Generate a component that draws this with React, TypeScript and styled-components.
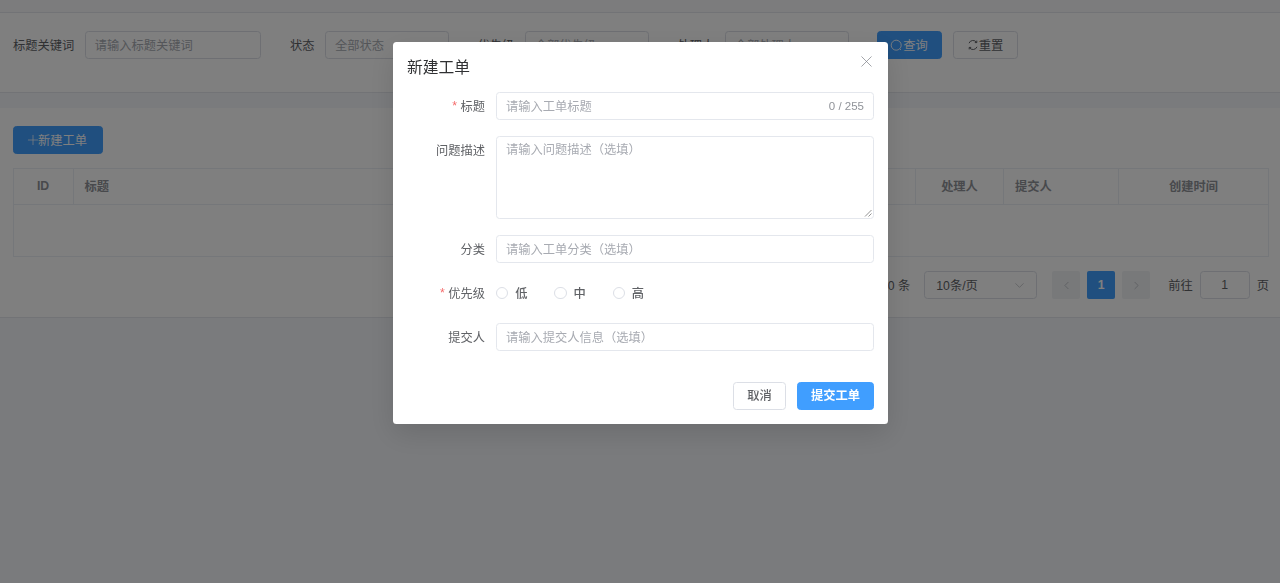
import styled, { createGlobalStyle } from "styled-components";
import { ChevronDown, ChevronLeft, ChevronRight, Plus, X } from "lucide-react";

const FONT = `"Liberation Sans", "Noto Sans CJK SC", sans-serif`;

const GlobalStyle = createGlobalStyle`
  html, body {
    margin: 0;
    padding: 0;
    height: 100%;
    background: #f5f7fa;
    font-family: ${FONT};
    font-size: 12.25px;
    color: #606266;
    overflow: hidden;
  }
  * { box-sizing: border-box; }
`;

const Page = styled.div`
  height: 583px;
  background: #f5f7fa;
`;

const TopStrip = styled.div`
  height: 13px;
  background: #f8f9fb;
  border-bottom: 1px solid #e4e7ed;
`;

const Card = styled.div`
  background: #fff;
  border-bottom: 1px solid #e4e7ed;
`;

const FilterCard = styled(Card)`
  height: 80px;
  padding: 18px 13px 0;
  display: flex;
  align-items: flex-start;
  margin-bottom: 15px;
`;

const FilterItem = styled.div`
  display: flex;
  align-items: center;
  height: 28px;
  margin-right: 28.7px;
`;

const FilterLabel = styled.label`
  margin-right: 10.5px;
  color: #606266;
  white-space: nowrap;
`;

const Field = styled.div<{ $w: number }>`
  width: ${(p) => p.$w}px;
  height: 28px;
  display: flex;
  align-items: center;
  justify-content: space-between;
  padding: 0 9px;
  border: 1px solid #dcdfe6;
  border-radius: 3.5px;
  color: #a8abb2;
  background: #fff;
  white-space: nowrap;
`;

const Btn = styled.button<{ $primary?: boolean }>`
  display: inline-flex;
  align-items: center;
  justify-content: center;
  height: 28px;
  padding: 0;
  border: 1px solid ${(p) => (p.$primary ? "#409eff" : "#dcdfe6")};
  border-radius: 3.5px;
  background: ${(p) => (p.$primary ? "#409eff" : "#fff")};
  color: ${(p) => (p.$primary ? "#fff" : "#606266")};
  font: inherit;
`;

const FilterButton = styled(Btn)`
  width: 65px;
  margin-right: 11px;
`;

const QueryGroup = styled.div`
  display: flex;
  margin-left: -1px;
`;

const TableCard = styled(Card)`
  height: 210px;
  padding: 18px 11px 0 12.5px;
`;

const NewButton = styled(Btn)`
  width: 90px;
`;

const PlusIcon = styled(Plus)`
  margin: 0 -3px;
`;

const Table = styled.div`
  margin-top: 14px;
  height: 89px;
  border: 1px solid #ebeef5;
`;

const HeaderRow = styled.div`
  display: grid;
  grid-template-columns: 60px 1fr 120px 120px 120px 88px 115px 149px;
  height: 36px;
  border-bottom: 1px solid #ebeef5;
`;

const HeaderCell = styled.div<{ $center?: boolean }>`
  display: flex;
  align-items: center;
  justify-content: ${(p) => (p.$center ? "center" : "flex-start")};
  padding: 0 11px 2px;
  border-right: 1px solid #ebeef5;
  color: #909399;
  font-weight: 700;
  &:last-child { border-right: none; }
`;

const Pager = styled.div`
  display: flex;
  align-items: center;
  justify-content: flex-end;
  height: 28px;
  margin-top: 14px;
`;

const PagerBox = styled.div<{ $active?: boolean }>`
  width: 28px;
  height: 28px;
  display: flex;
  align-items: center;
  justify-content: center;
  margin-right: 7px;
  border-radius: 2px;
  font-weight: 700;
  background: ${(p) => (p.$active ? "#409eff" : "#f0f2f5")};
  color: ${(p) => (p.$active ? "#fff" : "#a8abb2")};
`;

const Total = styled.span`
  margin-right: 14px;
`;

const SizeSelect = styled(Field)`
  color: #606266;
  margin-right: 15px;
  padding-left: 11px;
`;

const GotoLabel = styled.span`
  margin: 0 7px 0 11px;
`;

const GotoInput = styled(Field)`
  justify-content: center;
  color: #606266;
`;

const PageUnit = styled.span`
  margin-left: 7px;
`;

const Mask = styled.div`
  position: fixed;
  inset: 0;
  z-index: 10;
  background: rgba(0, 0, 0, 0.5);
  display: flex;
  justify-content: center;
  align-items: flex-start;
`;

const Modal = styled.div`
  width: 495px;
  height: 382px;
  margin: 42px 0 0 1px;
  padding: 0 14px;
  background: #fff;
  border-radius: 3.5px;
  box-shadow: 0 10px 28px rgba(0, 0, 0, 0.12);
`;

const ModalHead = styled.div`
  height: 50px;
  padding-bottom: 2px;
  display: flex;
  align-items: center;
  justify-content: space-between;
`;

const ModalTitle = styled.h2`
  margin: 0;
  font-size: 15.75px;
  font-weight: 400;
  color: #303133;
`;

const CloseButton = styled.button`
  display: flex;
  padding: 0;
  border: none;
  background: none;
  color: #7d8087;
  margin: -9px -2px 0 0;
`;

const Form = styled.div`
  display: flex;
  flex-direction: column;
  gap: 16px;
`;

const FormRow = styled.div`
  display: flex;
  align-items: flex-start;
`;

const FormLabel = styled.label<{ $required?: boolean }>`
  width: 78px;
  height: 28px;
  flex: none;
  display: flex;
  align-items: center;
  justify-content: flex-end;
  margin-right: 11px;
  color: #606266;
  &::before {
    content: ${(p) => (p.$required ? '"*"' : "none")};
    color: #f56c6c;
    margin-right: 3.5px;
  }
`;

const Input = styled(Field).attrs({ $w: 378 })`
  color: #a8abb2;
  border-color: #e4e7ed;
`;

const Counter = styled.span`
  color: #909399;
  font-size: 11.5px;
`;

const TextArea = styled.div`
  position: relative;
  width: 378px;
  height: 83px;
  padding: 4px 9px;
  border: 1px solid #e4e7ed;
  border-radius: 3.5px;
  color: #a8abb2;
  line-height: 18px;
`;

const ResizeGrip = styled.svg`
  position: absolute;
  right: 1px;
  bottom: 1px;
`;

const RadioGroup = styled.div`
  display: flex;
  align-items: center;
  height: 28px;
`;

const RadioOption = styled.label`
  width: 58.3px;
  display: flex;
  align-items: center;
  color: #606266;
  font-weight: 500;
`;

const RadioDot = styled.span`
  width: 12.25px;
  height: 12.25px;
  border: 1px solid #dcdfe6;
  border-radius: 50%;
  margin-right: 7px;
`;

const Footer = styled.div`
  display: flex;
  justify-content: flex-end;
  gap: 11px;
  margin-top: 31px;
`;

const CancelButton = styled(Btn)`
  width: 53px;
  padding-bottom: 2px;
  font-weight: 500;
`;

const SubmitButton = styled(Btn)`
  width: 77px;
  padding-bottom: 2px;
  font-weight: 700;
`;

const columns = ["ID", "标题", "状态", "优先级", "分类", "处理人", "提交人", "创建时间"];
const centered = new Set(["ID", "处理人", "创建时间"]);

function SearchIcon() {
  return (
    <svg width="13" height="13" viewBox="0 0 13 13" fill="none" stroke="currentColor" strokeWidth="0.9">
      <circle cx="6.2" cy="6.2" r="5" />
      <path d="M9.8 9.8 11 11" />
    </svg>
  );
}

function RefreshIcon() {
  return (
    <svg width="12" height="12" viewBox="0 0 12 12" fill="none" stroke="currentColor" strokeWidth="1">
      <path d="M2 4.2A4.3 4.3 0 0 1 9.6 3.4M10 7.8A4.3 4.3 0 0 1 2.4 8.6" />
      <path d="M9.8 1.6v2h-2M2.2 10.4v-2h2" />
    </svg>
  );
}

export default function App() {
  return (
    <>
      <GlobalStyle />
      <Page>
        <TopStrip />
        <FilterCard>
          <FilterItem>
            <FilterLabel>标题关键词</FilterLabel>
            <Field $w={176.5}>请输入标题关键词</Field>
          </FilterItem>
          <FilterItem>
            <FilterLabel>状态</FilterLabel>
            <Field $w={124}>全部状态</Field>
          </FilterItem>
          <FilterItem>
            <FilterLabel>优先级</FilterLabel>
            <Field $w={124}>全部优先级</Field>
          </FilterItem>
          <FilterItem>
            <FilterLabel>处理人</FilterLabel>
            <Field $w={124}>全部处理人</Field>
          </FilterItem>
          <QueryGroup>
            <FilterButton $primary>
              <SearchIcon />查询
            </FilterButton>
            <FilterButton>
              <RefreshIcon />重置
            </FilterButton>
          </QueryGroup>
        </FilterCard>
        <TableCard>
          <NewButton $primary>
            <PlusIcon size={16} strokeWidth={1.1} />新建工单
          </NewButton>
          <Table>
            <HeaderRow>
              {columns.map((c) => (
                <HeaderCell key={c} $center={centered.has(c)}>{c}</HeaderCell>
              ))}
            </HeaderRow>
          </Table>
          <Pager>
            <Total>共 0 条</Total>
            <SizeSelect $w={113}>
              10条/页
              <ChevronDown size={15} strokeWidth={1} color="#a8abb2" />
            </SizeSelect>
            <PagerBox><ChevronLeft size={13} strokeWidth={1.2} /></PagerBox>
            <PagerBox $active>1</PagerBox>
            <PagerBox><ChevronRight size={13} strokeWidth={1.2} /></PagerBox>
            <GotoLabel>前往</GotoLabel>
            <GotoInput $w={50}>1</GotoInput>
            <PageUnit>页</PageUnit>
          </Pager>
        </TableCard>
      </Page>
      <Mask>
        <Modal>
          <ModalHead>
            <ModalTitle>新建工单</ModalTitle>
            <CloseButton><X size={19} strokeWidth={0.9} /></CloseButton>
          </ModalHead>
          <Form>
            <FormRow>
              <FormLabel $required>标题</FormLabel>
              <Input>
                请输入工单标题
                <Counter>0 / 255</Counter>
              </Input>
            </FormRow>
            <FormRow>
              <FormLabel>问题描述</FormLabel>
              <TextArea>
                请输入问题描述（选填）
                <ResizeGrip width="8" height="8" viewBox="0 0 8 8">
                  <path d="M1 7.5 7.5 1M4.5 7.5 7.5 4.5" stroke="#777" strokeWidth="0.8" />
                </ResizeGrip>
              </TextArea>
            </FormRow>
            <FormRow>
              <FormLabel>分类</FormLabel>
              <Input>请输入工单分类（选填）</Input>
            </FormRow>
            <FormRow>
              <FormLabel $required>优先级</FormLabel>
              <RadioGroup>
                <RadioOption><RadioDot />低</RadioOption>
                <RadioOption><RadioDot />中</RadioOption>
                <RadioOption><RadioDot />高</RadioOption>
              </RadioGroup>
            </FormRow>
            <FormRow>
              <FormLabel>提交人</FormLabel>
              <Input>请输入提交人信息（选填）</Input>
            </FormRow>
          </Form>
          <Footer>
            <CancelButton>取消</CancelButton>
            <SubmitButton $primary>提交工单</SubmitButton>
          </Footer>
        </Modal>
      </Mask>
    </>
  );
}
